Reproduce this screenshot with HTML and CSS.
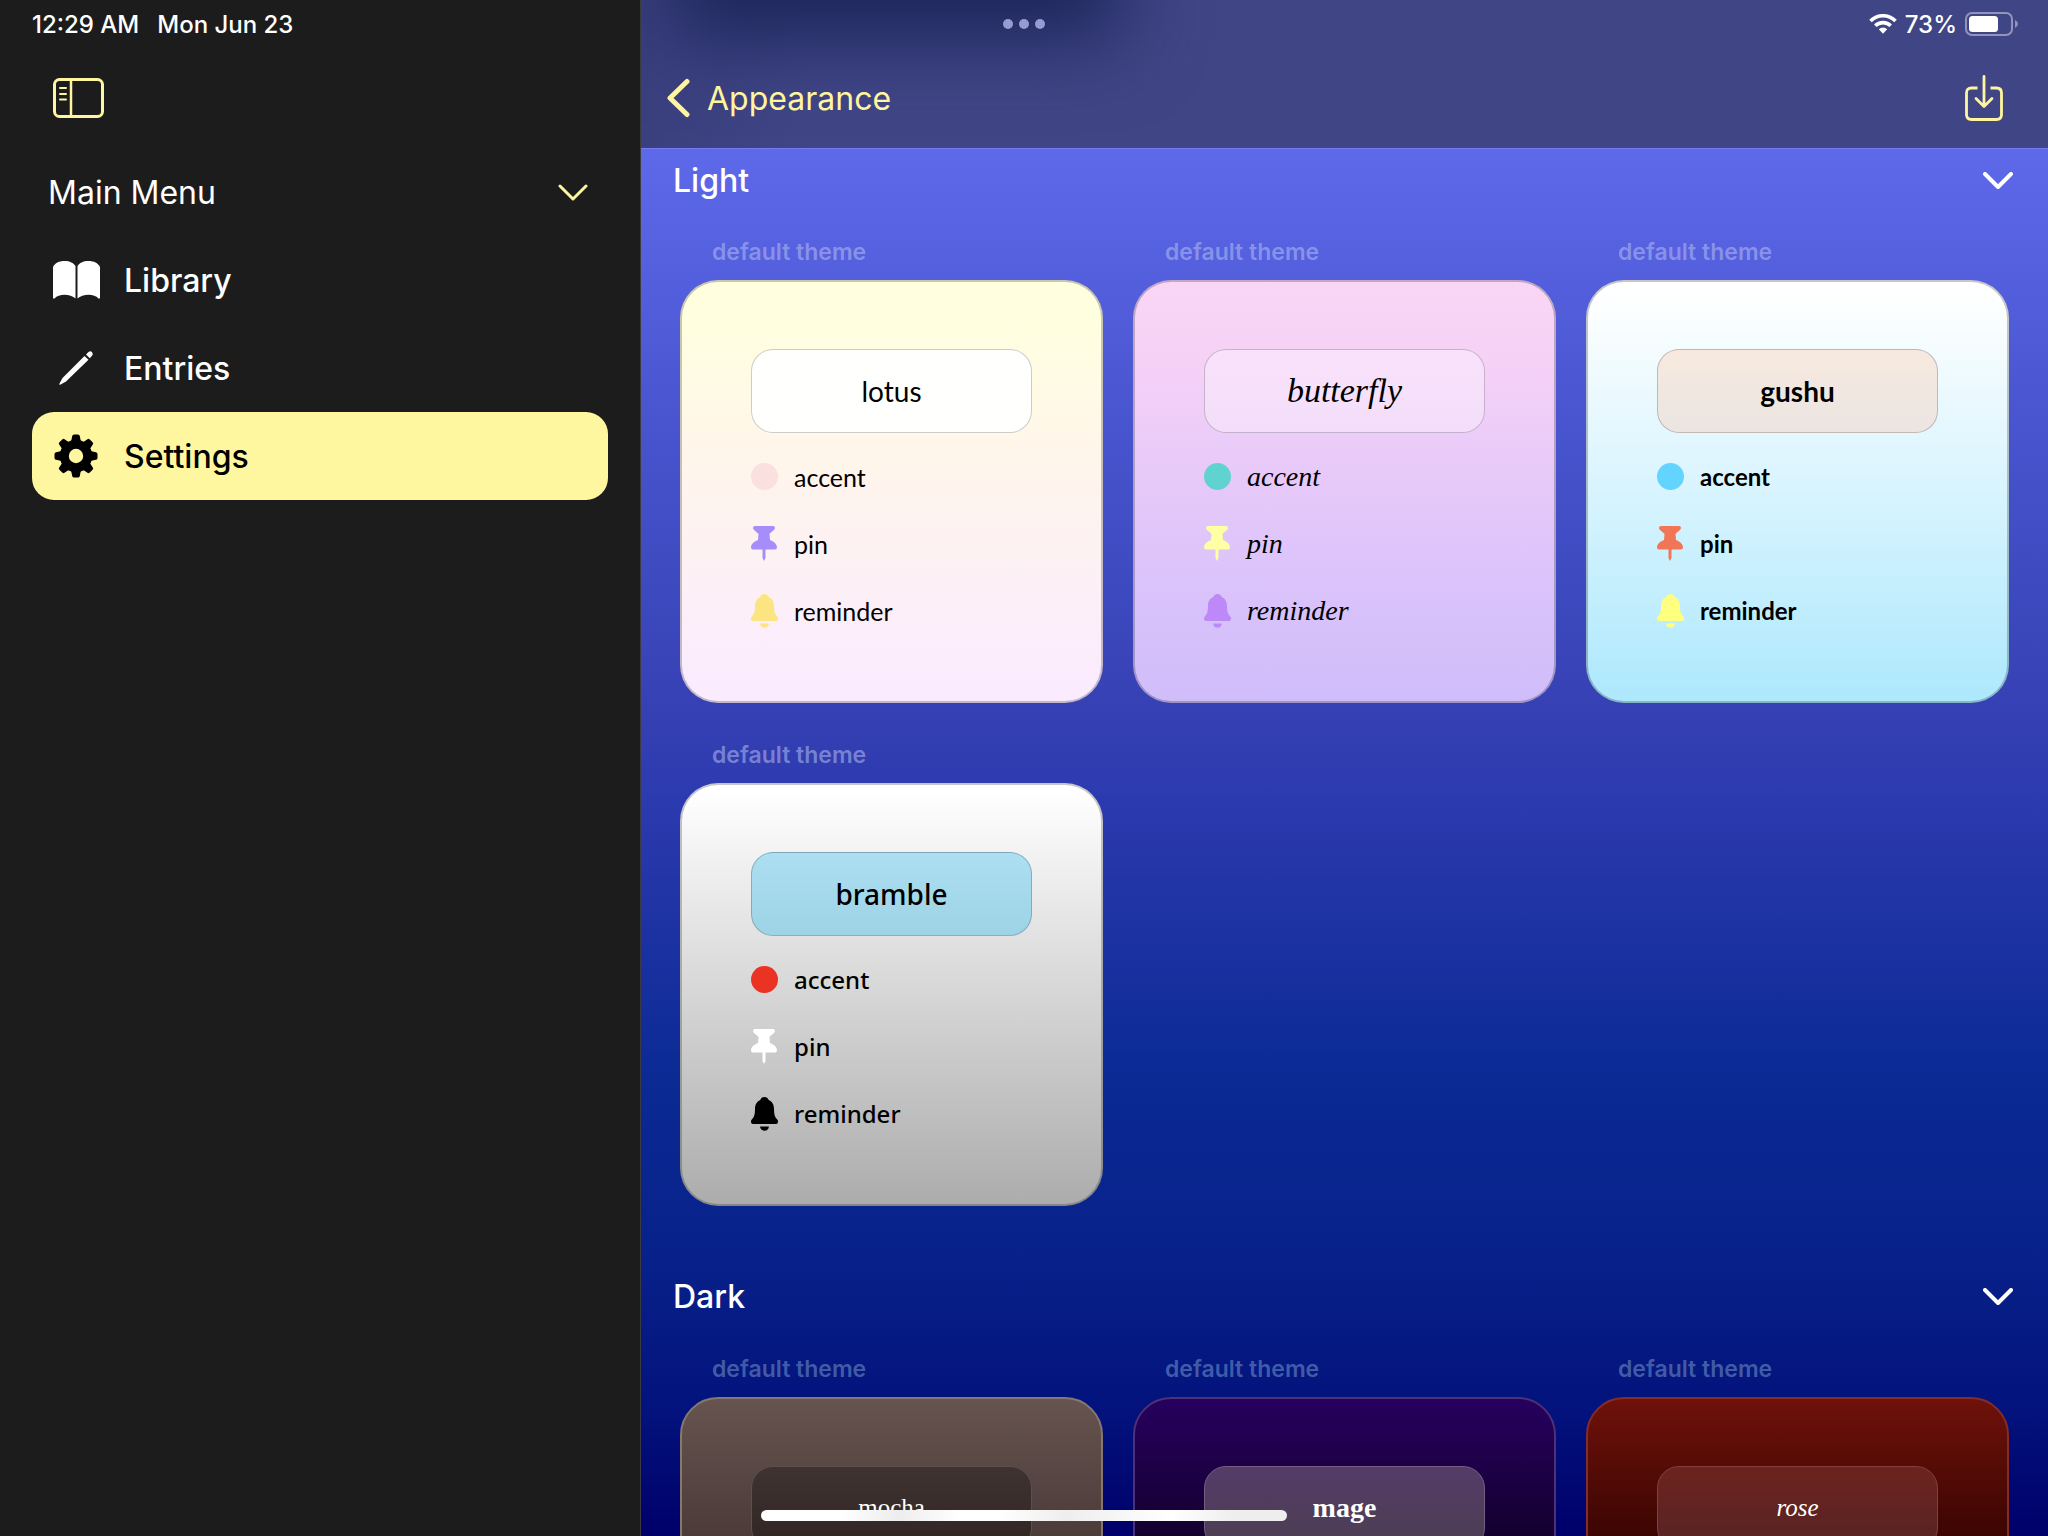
FILE: index.html
```html
<!DOCTYPE html>
<html lang="en">
<head>
<meta charset="utf-8">
<meta name="viewport" content="width=device-width, initial-scale=1">
<title>Appearance</title>
<link rel="stylesheet" href="styles.css">
</head>
<body>
<svg class="sprite" aria-hidden="true">
  <symbol id="chevron-down" viewBox="0 0 30 17"><path d="M2 2 15 15 28 2" fill="none" stroke="currentColor" stroke-linecap="round" stroke-linejoin="round"/></symbol>
  <symbol id="pin" viewBox="0 0 27 35"><path d="M4 0h18q2 0 2 2c0 2-4 4-5.500 6l.5 6c4.500 1.500 7 4.500 7 7.500q0 2-2 2H2q-2 0-2-2c0-3 2.500-6 7-7.500l.5-6C6 6 2 4 2 2q0-2 2-2z"/><path d="M11.500 23h3v9l-1.500 3-1.500-3z"/></symbol>
  <symbol id="bell" viewBox="0 0 27 34"><path d="M13.500 0c2 0 3.500 1 4.200 3 3.800 1.700 5.300 5 5.300 9 0 5 .7 8 3 10.300 1 1 1 1.700 1 2.700q0 2-2 2H2q-2 0-2-2c0-1 0-1.700 1-2.700C3.300 20 4 17 4 12c0-4 1.500-7.300 5.300-9C10 1 11.500 0 13.500 0z"/><path d="M9 29.500h9c-.4 2.700-2.200 4.300-4.500 4.300S9.400 32.200 9 29.500z"/></symbol>
</svg>

<div class="app">
  <aside class="sidebar">
    <div class="status"><span>12:29 AM</span><span>Mon Jun 23</span></div>
    <div class="sidebar-tools">
      <button class="plain" type="button" aria-label="Toggle sidebar">
        <svg width="51" height="40" viewBox="0 0 51 40" fill="none" stroke="currentColor"><rect x="1.500" y="1.500" width="48" height="37" rx="5" stroke-width="3"/><path d="M18 2v36" stroke-width="2.500"/><path d="M7 10h6M7 16h6M7 21.500h6" stroke-width="2" stroke-linecap="round"/></svg>
      </button>
    </div>
    <button class="menu-head" type="button"><span>Main Menu</span><svg class="chevron" width="30" height="17"><use href="#chevron-down"/></svg></button>
    <nav class="menu">
      <a href="#library"><span class="slot"><svg width="47" height="38" viewBox="0 0 47 38" fill="currentColor"><path d="M0 6C2 2 6 0 11.500 0 17 0 20.500 2 22.500 5v32.500C18 33 6 32 1.500 37.500Q0 38 0 36.500z"/><path d="M24.500 5C26.500 2 30 0 35.500 0 41 0 45 2 47 6v30.500q0 1.500-1.500 1C41 32 29 33 24.500 37.500z"/></svg></span><span>Library</span></a>
      <a href="#entries"><span class="slot"><svg width="34" height="34" viewBox="0 0 34 34" fill="currentColor"><path d="M25.500 5 29.500 8.800 7 30.500 1.200 33.700Q0 34 .4 32.800L3.500 27z"/><path d="M27 3.500 29.500 1Q31.500-.5 33 1.200 34.500 3 33 4.700L30.800 7.200z"/></svg></span><span>Entries</span></a>
      <a href="#settings" class="active" aria-current="page"><span class="slot"><svg width="44" height="44" viewBox="-22 -22 44 44" fill="currentColor"><defs><path id="tooth" d="M-5.200-13-3.800-20Q-3.400-21.500-2-21.500H2Q3.400-21.500 3.800-20L5.200-13z"/></defs><circle r="11.700" fill="none" stroke="currentColor" stroke-width="9"/><use href="#tooth"/><use href="#tooth" transform="rotate(45)"/><use href="#tooth" transform="rotate(90)"/><use href="#tooth" transform="rotate(135)"/><use href="#tooth" transform="rotate(180)"/><use href="#tooth" transform="rotate(225)"/><use href="#tooth" transform="rotate(270)"/><use href="#tooth" transform="rotate(315)"/></svg></span><span>Settings</span></a>
    </nav>
  </aside>

  <main class="detail">
    <header class="bar">
      <div class="status status-right">
        <svg width="28" height="20" viewBox="0 0 28 20" fill="none" stroke="currentColor" stroke-width="3.600"><path d="M1.500 7a17.500 17.500 0 0 1 25 0"/><path d="M6.300 11.800a11 11 0 0 1 15.400 0"/><path d="M9.800 15.300a6 6 0 0 1 8.400 0L14 19.800z" fill="currentColor" stroke="none"/></svg>
        <span>73%</span>
        <svg width="54" height="24" viewBox="0 0 54 24"><rect x="1" y="1" width="46" height="22" rx="6" fill="none" stroke="#9294bb" stroke-width="2"/><rect x="4" y="4" width="29" height="16" rx="3.500" fill="#fff"/><path d="M50 8q3 1.500 3 4t-3 4z" fill="#9294bb"/></svg>
      </div>
      <div class="toolbar">
        <a class="back" href="#settings"><svg width="23" height="40" viewBox="0 0 23 40" fill="none" stroke="currentColor" stroke-width="5" stroke-linecap="round" stroke-linejoin="round"><path d="M20 3.500 3 20 20 36.500"/></svg><span>Appearance</span></a>
        <button class="plain" type="button" aria-label="Import theme">
          <svg width="38" height="46" viewBox="0 0 38 46" fill="none" stroke="currentColor" stroke-width="2.800" stroke-linecap="round" stroke-linejoin="round"><path d="M12.500 13H6.500Q1.500 13 1.500 18V39.500Q1.500 44.500 6.500 44.500H31.500Q36.500 44.500 36.500 39.500V18Q36.500 13 31.500 13H25.500" stroke-linecap="butt"/><path d="M19 1.500V31M11 23.500 19 31.500 27 23.500"/></svg>
        </button>
      </div>
    </header>

    <section class="group">
      <button class="group-head" type="button"><span>Light</span><svg class="chevron bold" width="30" height="17"><use href="#chevron-down"/></svg></button>
      <div class="themes">
        <article class="theme lotus">
          <p class="tag">default theme</p>
          <div class="card"><h3>lotus</h3>
            <ul><li><i class="dot"></i>accent</li><li><svg class="pin"><use href="#pin"/></svg>pin</li><li><svg class="bell"><use href="#bell"/></svg>reminder</li></ul></div>
        </article>
        <article class="theme butterfly">
          <p class="tag">default theme</p>
          <div class="card"><h3>butterfly</h3>
            <ul><li><i class="dot"></i>accent</li><li><svg class="pin"><use href="#pin"/></svg>pin</li><li><svg class="bell"><use href="#bell"/></svg>reminder</li></ul></div>
        </article>
        <article class="theme gushu">
          <p class="tag">default theme</p>
          <div class="card"><h3>gushu</h3>
            <ul><li><i class="dot"></i>accent</li><li><svg class="pin"><use href="#pin"/></svg>pin</li><li><svg class="bell"><use href="#bell"/></svg>reminder</li></ul></div>
        </article>
        <article class="theme bramble">
          <p class="tag">default theme</p>
          <div class="card"><h3>bramble</h3>
            <ul><li><i class="dot"></i>accent</li><li><svg class="pin"><use href="#pin"/></svg>pin</li><li><svg class="bell"><use href="#bell"/></svg>reminder</li></ul></div>
        </article>
      </div>
    </section>

    <section class="group group-dark">
      <button class="group-head" type="button"><span>Dark</span><svg class="chevron bold" width="30" height="17"><use href="#chevron-down"/></svg></button>
      <div class="themes">
        <article class="theme mocha"><p class="tag">default theme</p><div class="card"><h3>mocha</h3></div></article>
        <article class="theme mage"><p class="tag">default theme</p><div class="card"><h3>mage</h3></div></article>
        <article class="theme rose"><p class="tag">default theme</p><div class="card"><h3>rose</h3></div></article>
      </div>
    </section>
  </main>
</div>
<div class="multitask" aria-hidden="true"><i></i><i></i><i></i></div>
<div class="home-indicator" aria-hidden="true"></div>
</body>
</html>
```
FILE: styles.css
```css
* { box-sizing: border-box; }

body {
  margin: 0;
  background: #1c1c1c;
  color: #fff;
  font-family: Inter, "Liberation Sans", sans-serif;
  font-size: 32px;
}

button {
  border: 0;
  padding: 0;
  background: none;
  color: inherit;
  font: inherit;
  cursor: pointer;
}

a { color: inherit; text-decoration: none; }
h3, p, ul { margin: 0; padding: 0; }
svg { display: block; flex: none; }
.sprite { position: absolute; width: 0; height: 0; }
.chevron { stroke-width: 3px; }
.chevron.bold { stroke-width: 4px; }

.app { display: flex; height: 100vh; overflow: hidden; }

/* Sidebar */
.sidebar {
  flex: 0 0 31.3%;
  border-right: 1px solid #3b3b3d;
}

.status {
  display: flex;
  align-items: center;
  gap: 18px;
  height: 48px;
  padding: 0 32px;
  font-size: 24px;
  font-weight: 500;
}

.plain { color: #fff59e; }
.plain svg { overflow: visible; }
.sidebar-tools { display: flex; align-items: center; height: 100px; padding: 0 53px; }

.menu-head {
  display: flex;
  align-items: center;
  justify-content: space-between;
  width: 100%;
  height: 88px;
  padding: 0 52px 0 48px;
}
.menu-head svg { color: #fff59e; }

.menu { padding: 0 32px; font-weight: 500; }
.menu a {
  display: flex;
  align-items: center;
  gap: 24px;
  height: 88px;
  padding-left: 20px;
  border-radius: 22px;
}
.menu .active { background: #fff7a0; color: #000; }
.slot { display: flex; justify-content: center; width: 48px; }

/* Detail pane */
.detail {
  flex: 1;
  min-width: 0;
  background: linear-gradient(#5f6aeb 9%, #525edb 19%, #3440b2 47%, #2e3bb1 51%, #0b2a94 70%, #08218a 82%, #03127c 92%, #00006a 100%);
}

.bar {
  position: relative;
  overflow: hidden;
  height: 149px;
  border-bottom: 1px solid #747cf0;
  background: linear-gradient(90deg, #3a3f7e, #404586 12%);
}
.bar::before {
  content: "";
  position: absolute;
  top: -120px;
  left: 30px;
  width: 450px;
  height: 160px;
  background: #1c2659;
  filter: blur(40px);
}
.bar > * { position: relative; }

.status-right { justify-content: flex-end; gap: 8px; padding: 0 29px; }

.toolbar {
  display: flex;
  align-items: center;
  justify-content: space-between;
  height: 100px;
  padding: 0 45px 0 26px;
  color: #fff59e;
}
.back { display: flex; align-items: center; gap: 17px; }

.group-head {
  display: flex;
  align-items: center;
  justify-content: space-between;
  width: 100%;
  height: 62px;
  padding: 0 35px 0 32px;
  font-weight: 500;
}
.group-dark { margin-top: 60px; }

.themes {
  display: grid;
  grid-template-columns: repeat(3, 1fr);
  gap: 38px 30px;
  padding: 27px 39px 0;
}

.tag {
  margin-bottom: 14px;
  padding-left: 32px;
  color: rgba(180, 190, 240, .55);
  font-size: 23px;
  font-weight: 600;
  line-height: 28px;
}
.group-dark .tag { color: rgba(125, 160, 205, .52); }

.card {
  aspect-ratio: 1;
  padding: 67px 69px 0;
  border: 2px solid var(--edge, rgba(0, 0, 0, .22));
  border-radius: 38px;
  background: var(--bg) border-box;
  color: #000;
}

.card h3 {
  display: flex;
  align-items: center;
  justify-content: center;
  height: 84px;
  margin-bottom: 10px;
  border: 1px solid var(--edge, rgba(0, 0, 0, .2));
  border-radius: 22px;
  background: var(--field);
  font-size: 28px;
  font-weight: inherit;
}

.card ul { list-style: none; font-size: 24px; }
.card li { display: flex; align-items: center; gap: 16px; height: 67px; }

.dot { width: 27px; height: 27px; border-radius: 50%; background: var(--accent); }
.pin { width: 27px; height: 35px; fill: var(--pin); }
.bell { width: 27px; height: 34px; fill: var(--bell); }

.lotus {
  --bg: linear-gradient(#ffffdf 8%, #fff6ea 40%, #fdf2f2 62%, #fbebff 96%);
  --field: #fffffd;
  --accent: #fae1df;
  --pin: #a68df9;
  --bell: #fce483;
}
.lotus .card { font-family: Lato, sans-serif; }
.lotus ul { font-size: 25px; }

.butterfly {
  --bg: linear-gradient(#f9d6f5, #f5d1f7 20%, #dfc5fa 62%, #cfbdfb);
  --field: rgba(255, 255, 255, .35);
  --accent: #60d2cf;
  --pin: #ffffa3;
  --bell: #bd88f7;
}
.butterfly .card, .rose .card {
  font-family: "Snell Roundhand", "Liberation Serif", cursive;
  font-style: italic;
}
.butterfly h3 { font-size: 34px; }
.butterfly ul { font-size: 28px; }

.gushu {
  --bg: linear-gradient(#fff 3%, #d8f4fe 50%, #ade8fd);
  --field: linear-gradient(#f7e9df, #ebe5e2);
  --accent: #63d4fd;
  --pin: #f07656;
  --bell: #ffff80;
}
.gushu .card { font-family: Chalkboard, Lato, sans-serif; font-weight: 700; }

.bramble {
  --bg: linear-gradient(#fff 2%, #d6d6d6 50%, #acacac);
  --field: linear-gradient(#abdff1, #9ed3e5);
  --accent: #eb3323;
  --pin: #fff;
  --bell: #000;
}
.bramble .card { font-family: "Noto Sans", sans-serif; font-weight: 500; }

.group-dark .card { color: #fff; }
.group-dark h3 { font-size: 25px; }
.mocha {
  --edge: #85786e;
  --bg: linear-gradient(#675450, #4b3b39 33%, #2f2422);
  --field: linear-gradient(#3e3330, #302523);
}
.mocha .card { font-family: "American Typewriter", "Liberation Serif", serif; }
.mage {
  --edge: #4f2f75;
  --bg: linear-gradient(#27005f, #14002f 33%, #080014);
  --field: linear-gradient(#553c68, #4b3e51);
}
.mage .card { font-family: "Liberation Serif", serif; font-weight: 700; }
.mage h3 { border-color: #765d82; font-size: 28px; }
.rose {
  --edge: #852b2a;
  --bg: linear-gradient(#6f120a, #3c0502 33%, #200000);
  --field: linear-gradient(#6d231d, #562326);
}
.mocha h3 { border-color: #5b504c; }
.rose h3 { border-color: #83403e; }

/* System overlays */
.multitask {
  position: fixed;
  top: 19px;
  left: 50%;
  display: flex;
  gap: 6px;
  transform: translateX(-50%);
}
.multitask i { width: 10px; height: 10px; border-radius: 50%; background: #969bd3; }

.home-indicator {
  position: fixed;
  bottom: 15px;
  left: 50%;
  width: 526px;
  height: 11px;
  border-radius: 6px;
  background: linear-gradient(90deg, #fff 15%, #ededed 26%, #fff 38%, #fff 45%, #eee 58%, #fff 78%, #eee 90%);
  transform: translateX(-50%);
}
```
